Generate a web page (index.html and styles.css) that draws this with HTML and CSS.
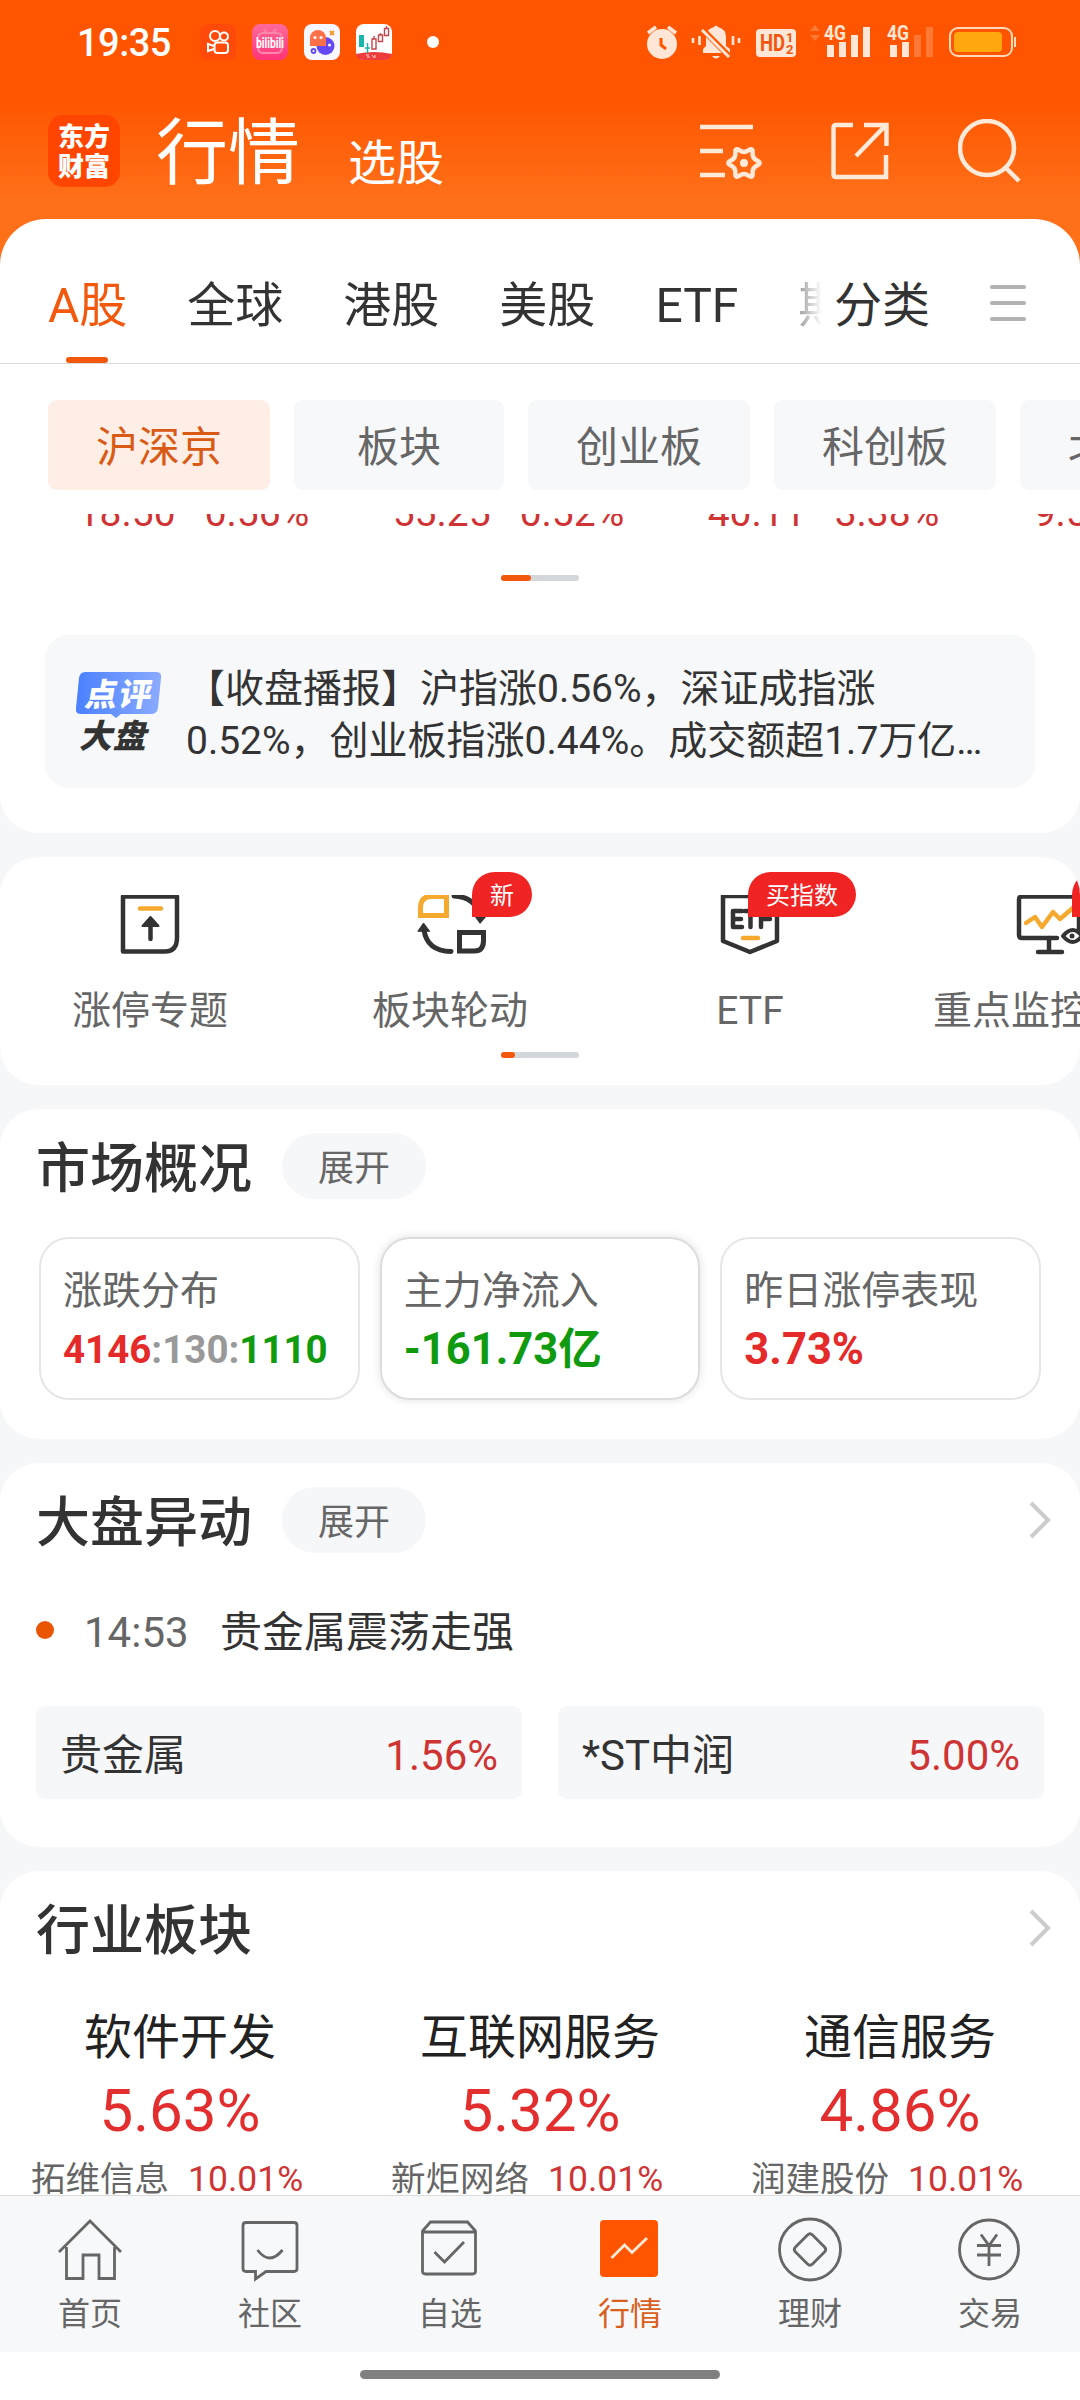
FILE: index.html
```html
<!DOCTYPE html>
<html lang="zh-CN">
<head>
    <meta charset="UTF-8">
    <meta name="viewport" content="width=device-width, initial-scale=1.0">
    <title>行情</title>
    <link rel="stylesheet" href="styles.css">
</head>
<body>
    <div class="app">
        <header class="header">
            <div class="status-bar">
                <span class="clock">19:35</span>
                <div class="status-apps">
                    <svg width="36" height="36" viewBox="0 0 36 36">
                        <rect width="36" height="36" rx="8" fill="#ff4a0a"/>
                        <g fill="none" stroke="#fff" stroke-width="2">
                            <circle cx="15" cy="12" r="5"/><circle cx="24" cy="12.500" r="4"/>
                            <rect x="14.500" y="18.500" width="13.500" height="10.500" rx="3"/>
                            <path d="M14 22l-6-2v7l6-2"/>
                        </g>
                    </svg>
                    <svg width="36" height="36" viewBox="0 0 36 36">
                        <defs><linearGradient id="pink" x1="0" y1="0" x2="0" y2="1"><stop offset="0" stop-color="#ff6a9a"/><stop offset="1" stop-color="#ff3479"/></linearGradient></defs>
                        <rect width="36" height="36" rx="8" fill="url(#pink)"/>
                        <path d="M12 5l3 4M24 5l-3 4M11 9h14q5 0 5 5v9q0 6-5 6H11q-5 0-5-6v-9q0-5 5-5z" fill="none" stroke="#ff86ad" stroke-width="2"/>
                        <text x="18" y="24" class="bili" textLength="28" lengthAdjust="spacingAndGlyphs">bilibili</text>
                    </svg>
                    <svg width="36" height="36" viewBox="0 0 36 36">
                        <rect width="36" height="36" rx="8" fill="#f7f7ff"/>
                        <circle cx="21.500" cy="22" r="9" fill="#6548f5"/>
                        <path d="M6 22v-8a8 8 0 0 1 16 0v8z" fill="#ff7048"/>
                        <g fill="#fff"><circle cx="11" cy="13.500" r="1.500"/><circle cx="17" cy="13.500" r="1.500"/><circle cx="25.500" cy="21" r="1.500"/></g>
                        <path d="M26 7l4 4m0-4l-4 4" stroke="#f29a2e" stroke-width="2"/>
                        <circle cx="9.500" cy="27" r="2" fill="none" stroke="#6548f5" stroke-width="1.800"/>
                    </svg>
                    <svg width="36" height="36" viewBox="0 0 36 36">
                        <rect width="36" height="36" rx="8" fill="#fff"/>
                        <path d="M0 30q18-4 36 0q-1 6-8 6H8q-7 0-8-6z" fill="#ee3b3b"/>
                        <path d="M3 11h5v12H3z" fill="#17b5ac"/>
                        <path d="M11.500 19v10M9 24h5" stroke="#17b5ac" stroke-width="1.500"/>
                        <path d="M16 15h4v10h-4zM18 12v3M22.500 11h4v6.500h-4zM24.500 9v2M28.500 4.500h4v7h-4zM30.500 2v3" fill="none" stroke="#c4454e" stroke-width="1.400"/>
                        <path d="M10 31h3m-2 2h3m2-2l2 3m1-3v3" stroke="#ffd8d8" stroke-width="1"/>
                    </svg>
                </div>
                <i class="status-dot"></i>
                <svg class="status-icons" width="376" height="40" viewBox="642 22 376 40">
                    <g fill="#ffe6d6">
                        <circle cx="662" cy="44" r="15"/>
                        <path d="M648 33l8-6M676 33l-8-6" stroke="#ffe6d6" stroke-width="3.500"/>
                        <path d="M661 38v7l5 4" fill="none" stroke="#ff5500" stroke-width="3"/>
                        <path d="M703 53v-4l3-3v-9q0-8 8-10q2-3 4 0q8 2 8 10v9l4 3v4zM712 56h8q-4 5-8 0z"/>
                        <path d="M701 28l28 28" stroke="#ff5500" stroke-width="6"/>
                        <path d="M702 30l27 27" stroke="#ffe6d6" stroke-width="3"/>
                        <path d="M693 38v5M699.500 36v9M733 36v9M739 38v5" stroke="#ffe6d6" stroke-width="2.600"/>
                        <rect x="756" y="29" width="40" height="28" rx="4"/>
                        <path d="M827 45h7v12h-7zM839 42h7v15h-7zM851 35h7v22h-7zM863 27h7v30h-7zM890 45h7v12h-7zM902 42h7v15h-7z"/>
                        <g opacity=".25"><path d="M914 35h7v22h-7zM926 27h7v30h-7zM810 31l5-6 5 6zM810 35l5 6 5-6z"/></g>
                    </g>
                    <text x="760" y="51" class="hd" textLength="25" lengthAdjust="spacingAndGlyphs">HD</text>
                    <text x="786" y="42" class="hd-sub">1</text>
                    <text x="786" y="54" class="hd-sub">2</text>
                    <text x="824" y="40" class="net" textLength="22" lengthAdjust="spacingAndGlyphs">4G</text>
                    <text x="887" y="40" class="net" textLength="22" lengthAdjust="spacingAndGlyphs">4G</text>
                    <rect x="950" y="28" width="62" height="28" rx="8" fill="none" stroke="#ffd9b8" stroke-width="2"/>
                    <rect x="954" y="32" width="48" height="20" rx="4" fill="#ffa70f"/>
                    <path d="M1015 37v10" stroke="#ffd9b8" stroke-width="2"/>
                </svg>
            </div>
            <div class="title-bar">
                <div class="logo"><span>东方</span><span>财富</span></div>
                <h1 class="title">行情</h1>
                <span class="subtitle">选股</span>
                <div class="header-icons">
                    <svg width="64" height="64" viewBox="1 0 64 64" fill="none" stroke="#ffe9d9" stroke-width="4.500">
                        <path d="M0 8h54M0 32h24M0 56h26"/>
                        <path d="M58.100 41.600Q53.200 39.200 53.600 33.800Q54 28.400 49.500 31.400Q45 34.500 40.500 31.400Q36 28.400 36.400 33.800Q36.800 39.200 31.900 41.600Q27 44 31.900 46.400Q36.800 48.800 36.400 54.200Q36 59.600 40.500 56.600Q45 53.500 49.500 56.600Q54 59.600 53.600 54.200Q53.200 48.800 58.100 46.400Q63 44 58.100 41.600z"/>
                        <circle cx="45" cy="44" r="4" fill="#ffe9d9" stroke="none"/>
                    </svg>
                    <svg width="60" height="64" viewBox="2 0 60 64" fill="none" stroke="#ffe9d9" stroke-width="4.500">
                        <path d="M24 6H7Q4.500 6 4.500 9v46q0 3 2.500 3h50V36M35 6h22.500v21M57 6L27 37"/>
                    </svg>
                    <svg width="64" height="64" viewBox="0 0 64 64" fill="none" stroke="#ffe9d9" stroke-width="4.500">
                        <circle cx="29" cy="29" r="27"/><path d="M47 48l14 14"/>
                    </svg>
                </div>
            </div>
        </header>

        <section class="card card-first">
            <nav class="tabs">
                <div class="tab-list">
                    <span class="tab active">A股</span>
                    <span class="tab">全球</span>
                    <span class="tab">港股</span>
                    <span class="tab">美股</span>
                    <span class="tab">ETF</span>
                    <span class="tab">期</span>
                </div>
                <span class="tab-more">分类</span>
                <div class="burger"><i></i><i></i><i></i></div>
            </nav>
            <div class="chips">
                <span class="chip active">沪深京</span>
                <span class="chip chip-short">板块</span>
                <span class="chip">创业板</span>
                <span class="chip">科创板</span>
                <span class="chip">北交所</span>
            </div>
            <div class="indices">
                <div class="index"><span>18.50</span><span>0.56%</span></div>
                <div class="index"><span>55.25</span><span>0.52%</span></div>
                <div class="index"><span>40.11</span><span>3.38%</span></div>
                <div class="index"><span>9.53</span><span>0.56%</span></div>
            </div>
            <div class="pager"><i class="pager-on"></i></div>
            <div class="notice">
                <svg class="notice-tag" width="88" height="84" viewBox="0 0 88 84">
                    <defs><linearGradient id="blue"><stop offset="0" stop-color="#4a80ff"/><stop offset="1" stop-color="#8aabff"/></linearGradient></defs>
                    <path d="M9 1h71q6 0 5 6l-3 30q-1 6-7 6H45l-5 4-5-4H5q-6 0-5-6L3 7q1-6 6-6z" fill="url(#blue)"/>
                    <text x="14" y="35" transform="skewX(-10)" class="tag-top" textLength="66">点评</text>
                    <text x="22" y="77" transform="skewX(-14)" class="tag-bottom" textLength="67">大盘</text>
                </svg>
                <p class="notice-text">【收盘播报】沪指涨0.56%，深证成指涨<br>0.52%，创业板指涨0.44%。成交额超1.7万亿…</p>
            </div>
        </section>

        <section class="card quick">
            <div class="quick-list">
                <div class="quick-item">
                    <svg width="72" height="62" viewBox="0 1 72 62" fill="none" stroke="#333" stroke-width="4.500" stroke-linecap="round" stroke-linejoin="round">
                        <path d="M9 2.500h54v41q0 14-12 14H9z"/>
                        <path d="M26 14.500h21" stroke="#f5a92f"/>
                        <path d="M36.500 28v17"/><path d="M36.500 23l-8 9h16z" fill="#333" stroke-width="2"/>
                    </svg>
                    <span>涨停专题</span>
                </div>
                <div class="quick-item">
                    <svg width="72" height="62" viewBox="-1 1 72 62" fill="none" stroke="#333" stroke-width="5" stroke-linecap="round">
                        <path d="M5.500 21.500v-8q0-11 11-11h15v19z" stroke="#f5a92f"/>
                        <path d="M39 2q22 1 26 21"/>
                        <path d="M60 23l5 7 6-7z" fill="#333" stroke="none"/>
                        <path d="M36 57.500Q12 57 9 36"/>
                        <path d="M3 37l5.500-8 6 8z" fill="#333" stroke-width="1"/>
                        <path d="M44.500 38.500h24v8q0 10.500-9 10.500h-15z"/>
                    </svg>
                    <span>板块轮动</span>
                    <b class="badge">新</b>
                </div>
                <div class="quick-item">
                    <svg width="72" height="62" viewBox="0 1 72 62" fill="none" stroke="#333" stroke-width="4.500" stroke-linejoin="round" stroke-linecap="round">
                        <path d="M9 2h54v45L36 58 9 47z"/>
                        <path d="M29 44h15" stroke="#f5a92f"/>
                        <path d="M28 17h-9v16h9M19 25h8M31 17h11M36.500 17v16M57 17H47v16M47 25h9"/>
                    </svg>
                    <span>ETF</span>
                    <b class="badge badge-wide">买指数</b>
                </div>
                <div class="quick-item">
                    <svg width="72" height="62" viewBox="0 1 72 62" fill="none" stroke="#333" stroke-width="4.500" stroke-linejoin="round" stroke-linecap="round">
                        <path d="M43 44H8q-3 0-3-3V5.500q0-3 3-3h54q3 0 3 3v30"/>
                        <path d="M35 44v13M24 58h24"/>
                        <path d="M12 29l9-6 7 10L39 18l7 7 14-12" stroke="#f5a92f"/>
                        <path d="M49 42q10-12 19 0q-9 12-19 0z" stroke-width="4"/><circle cx="58" cy="42" r="2.500" fill="#333" stroke="none"/>
                    </svg>
                    <span class="quick-cut">重点监控</span>
                    <b class="badge">新</b>
                </div>
            </div>
            <div class="pager"><i class="pager-on pager-short"></i></div>
        </section>

        <section class="card market">
            <div class="card-head">
                <h2>市场概况</h2>
                <span class="pill">展开</span>
            </div>
            <div class="stats">
                <div class="stat">
                    <span class="stat-label">涨跌分布</span>
                    <b class="stat-value stat-small"><em class="up">4146</em><em class="flat">:130:</em><em class="down">1110</em></b>
                </div>
                <div class="stat stat-on">
                    <span class="stat-label">主力净流入</span>
                    <b class="stat-value down">-161.73亿</b>
                </div>
                <div class="stat">
                    <span class="stat-label">昨日涨停表现</span>
                    <b class="stat-value up">3.73%</b>
                </div>
            </div>
        </section>

        <section class="card moves">
            <div class="card-head">
                <h2>大盘异动</h2>
                <span class="pill">展开</span>
                <svg class="arrow" width="24" height="38" viewBox="0 0 24 38"><path d="M3 2l17 17L3 36" fill="none" stroke="#ccc" stroke-width="4"/></svg>
            </div>
            <div class="move">
                <i class="dot"></i>
                <span class="time">14:53</span>
                <span>贵金属震荡走强</span>
            </div>
            <div class="move-boxes">
                <div class="move-box"><span>贵金属</span><span class="rate">1.56%</span></div>
                <div class="move-box"><span>*ST中润</span><span class="rate">5.00%</span></div>
            </div>
        </section>

        <section class="card sectors">
            <div class="card-head">
                <h2>行业板块</h2>
                <svg class="arrow" width="24" height="38" viewBox="0 0 24 38"><path d="M3 2l17 17L3 36" fill="none" stroke="#ccc" stroke-width="4"/></svg>
            </div>
            <div class="sector-list">
                <div class="sector">
                    <span class="sector-name">软件开发</span>
                    <span class="sector-rate">5.63%</span>
                    <div class="leader"><span>拓维信息</span><span class="rate">10.01%</span></div>
                </div>
                <div class="sector">
                    <span class="sector-name">互联网服务</span>
                    <span class="sector-rate">5.32%</span>
                    <div class="leader"><span>新炬网络</span><span class="rate">10.01%</span></div>
                </div>
                <div class="sector">
                    <span class="sector-name">通信服务</span>
                    <span class="sector-rate">4.86%</span>
                    <div class="leader"><span>润建股份</span><span class="rate">10.01%</span></div>
                </div>
            </div>
        </section>

        <nav class="bottom-nav">
            <div class="nav-item">
                <svg viewBox="0 0 68 68"><path d="M3 37l31-31 31 31M10.500 32v31.500H27V40h16v23.500h15.500V32"/></svg>
                <span>首页</span>
            </div>
            <div class="nav-item">
                <svg viewBox="0 0 68 68"><path d="M10 7.500h48q3 0 3 3v43q0 3-3 3H30L19.500 64v-7.500H10q-3 0-3-3v-43q0-3 3-3zM21.500 35q12 16 25 0"/></svg>
                <span>社区</span>
            </div>
            <div class="nav-item">
                <svg viewBox="1 0 68 68"><path d="M7.500 17v39q0 3 3 3h47q3 0 3-3V17zM7.500 16l8-9h37l8 9M19.500 37l10 10L49 27"/></svg>
                <span>自选</span>
            </div>
            <div class="nav-item active">
                <svg viewBox="1 0 68 68"><rect x="5" y="5" width="58" height="57" rx="4" fill="#ff5500" stroke="none"/><path d="M16.500 43L29.500 30l7.500 7.500L52 23" stroke="#ffe9d5"/></svg>
                <span>行情</span>
            </div>
            <div class="nav-item">
                <svg viewBox="0 0 68 68"><circle cx="34" cy="34.500" r="30.500"/><path d="M31.500 20q2.500-2.500 5 0l12 12q2.500 2.500 0 5l-12 12q-2.500 2.500-5 0l-12-12q-2.500-2.500 0-5z"/></svg>
                <span>理财</span>
            </div>
            <div class="nav-item">
                <svg viewBox="1 0 68 68"><circle cx="34" cy="34.500" r="29.500"/><path d="M26 19.500l8 11 8-11M34 30v21M22 30.500h24M22 40h24"/></svg>
                <span>交易</span>
            </div>
        </nav>
        <div class="home-bar"><i></i></div>
    </div>
</body>
</html>
```
FILE: styles.css
```css
* {
    box-sizing: border-box;
}
body {
    margin: 0;
    font-family: Roboto, "Noto Sans CJK SC", sans-serif;
    color: #333;
}
h1, h2, p {
    margin: 0;
}
i, em {
    font-style: normal;
}
svg {
    display: block;
    flex: none;
}
.app {
    width: 1080px;
    height: 2400px;
    overflow: hidden;
    display: flex;
    flex-direction: column;
    background: linear-gradient(#ff5500 100px, #ff7019 200px) no-repeat 0 0 / 100% 300px, #f6f7f9;
}

/* header */
.header {
    height: 219px;
    flex: none;
    color: #fff;
}
.status-bar {
    height: 84px;
    padding: 0 62px 0 77px;
    display: flex;
    align-items: center;
}
.clock {
    width: 123px;
    padding-top: 2px;
    font-size: 38px;
    font-weight: 500;
    letter-spacing: -0.5px;
}
.status-apps {
    display: flex;
    gap: 16px;
}
.bili {
    font: bold 15px Roboto, sans-serif;
    fill: #fff;
    text-anchor: middle;
}
.status-dot {
    width: 12px;
    height: 12px;
    margin-left: 35px;
    border-radius: 50%;
    background: #fff;
}
.status-icons {
    margin-left: auto;
}
.hd {
    font: bold 23px Roboto, sans-serif;
    fill: #f2560e;
}
.hd-sub {
    font: bold 13px Roboto, sans-serif;
    fill: #f2560e;
}
.net {
    font: bold 20px Roboto, sans-serif;
    fill: #ffe6d6;
}
.title-bar {
    height: 135px;
    padding: 0 58px 0 48px;
    display: flex;
    align-items: flex-start;
}
.logo {
    width: 72px;
    height: 72px;
    margin-top: 31px;
    padding-top: 5px;
    border-radius: 15px;
    background: #ff4500;
    text-align: center;
    font-family: "Noto Sans CJK SC", sans-serif;
    font-size: 26px;
    font-weight: 900;
    line-height: 30px;
}
.logo span {
    display: block;
}
.title {
    margin: 24px 0 0 36px;
    font-size: 72px;
    font-weight: 400;
    line-height: 92px;
}
.subtitle {
    margin: 48px 0 0 48px;
    font-size: 48px;
    line-height: 64px;
}
.header-icons {
    margin: 35px 0 0 auto;
    display: flex;
    gap: 67px;
}

/* cards */
.card {
    flex: none;
    margin-bottom: 24px;
    border-radius: 38px;
    background: #fff;
    overflow: hidden;
}
.card-first {
    height: 614px;
    border-radius: 46px 46px 38px 38px;
}
.tabs {
    height: 145px;
    padding: 0 54px 0 48px;
    border-bottom: 1px solid #dcdcdc;
    display: flex;
    font-size: 48px;
    line-height: 114px;
}
.tab-list {
    width: 774px;
    flex: none;
    display: flex;
    gap: 60px;
    overflow: hidden;
    mask-image: linear-gradient(to right, #000 725px, transparent 774px);
}
.tab {
    flex: none;
    padding-top: 30px;
}
.tab.active {
    position: relative;
    color: #f2590c;
}
.tab.active::after {
    content: '';
    position: absolute;
    left: 18px;
    bottom: 0;
    width: 42px;
    height: 6px;
    border-radius: 3px;
    background: #f2590c;
}
.tab-more {
    margin-left: 12px;
    padding-top: 30px;
}
.burger {
    width: 36px;
    height: 36px;
    margin: 66px 0 0 auto;
    display: flex;
    flex-direction: column;
    justify-content: space-between;
}
.burger i {
    height: 4px;
    border-radius: 2px;
    background: #b2b2b2;
}
.chips {
    margin-top: 36px;
    padding-left: 48px;
    display: flex;
    gap: 24px;
}
.chip {
    width: 222px;
    height: 90px;
    flex: none;
    border-radius: 9px;
    background: #f7f8fa;
    color: #666;
    font-size: 42px;
    line-height: 96px;
    text-align: center;
}
.chip-short {
    width: 210px;
}
.chip.active {
    background: #ffeee6;
    color: #d95a14;
}

/* scrolled under the chips, only the lower part shows */
.indices {
    height: 61px;
    margin-top: 24px;
    padding-left: 36px;
    overflow: hidden;
    display: flex;
    color: #d03333;
    font-size: 39px;
    line-height: 40px;
}
.index {
    width: 315px;
    margin-top: -21px;
    flex: none;
    display: flex;
    justify-content: center;
    gap: 29px;
}
.pager {
    width: 78px;
    height: 6px;
    margin: 0 auto;
    border-radius: 3px;
    background: #d3d6db;
}
.pager-on {
    display: block;
    width: 30px;
    height: 6px;
    border-radius: 3px;
    background: #f2590c;
}
.pager-short {
    width: 14px;
}
.notice {
    height: 153px;
    margin: 54px 45px 0;
    padding: 28px 0 0 31px;
    border-radius: 24px;
    background: #f7f8fa;
    display: flex;
}
.notice-tag {
    margin-top: 8px;
}
.tag-top {
    font: 900 32px "Noto Sans CJK SC", sans-serif;
    fill: #fff;
}
.tag-bottom {
    font: 900 33px "Noto Sans CJK SC", sans-serif;
    fill: #333;
}
.notice-text {
    margin-left: 22px;
    font-size: 39px;
    line-height: 52px;
    white-space: nowrap;
}

/* quick entries */
.quick {
    height: 228px;
}
.quick-list {
    height: 195px;
    display: flex;
}
.quick-item {
    position: relative;
    width: 300px;
    flex: none;
    padding-top: 38px;
    display: flex;
    flex-direction: column;
    align-items: center;
    color: #666;
    font-size: 39px;
    line-height: 48px;
}
.quick-item span {
    margin-top: 30px;
}
.quick-item .quick-cut {
    width: 234px;
}
.badge {
    position: absolute;
    left: 172px;
    top: 15px;
    width: 60px;
    height: 45px;
    border-radius: 23px 23px 23px 0;
    background: #f12424;
    color: #fff;
    font-size: 24px;
    font-weight: 400;
    line-height: 49px;
    text-align: center;
}
.badge-wide {
    left: 148px;
    width: 108px;
}

.card-head {
    height: 66px;
    margin-top: 24px;
    padding: 0 28px 0 36px;
    display: flex;
    align-items: center;
}
.card-head h2 {
    font-size: 54px;
    font-weight: 500;
    line-height: 66px;
    padding-top: 8px;
}
.pill {
    width: 144px;
    height: 66px;
    margin-left: 30px;
    border-radius: 33px;
    background: #f6f7f9;
    color: #666;
    font-size: 36px;
    line-height: 73px;
    text-align: center;
}
.arrow {
    margin-left: auto;
}

/* market overview */
.market {
    height: 330px;
}
.stats {
    margin-top: 38px;
    padding: 0 39px;
    display: flex;
    gap: 20px;
}
.stat {
    flex: 1;
    height: 163px;
    padding: 23px 0 0 22px;
    border: 2px solid #e6e6e6;
    border-radius: 30px;
    display: flex;
    flex-direction: column;
}
.stat-on {
    border-color: #dcdcdc;
    box-shadow: 0 0 10px rgba(0, 0, 0, 0.12);
}
.stat-label {
    color: #666;
    font-size: 39px;
    line-height: 58px;
}
.stat-value {
    font-size: 43.500px;
    line-height: 60px;
}
.stat-small {
    font-size: 38.500px;
}
.up {
    color: #e52a2a;
}
.flat {
    color: #999;
}
.down {
    color: #0f9a0f;
}

/* moves */
.moves {
    height: 384px;
}
.move {
    margin-top: 50px;
    padding-left: 36px;
    display: flex;
    align-items: center;
    font-size: 42px;
    line-height: 60px;
}
.dot {
    width: 18px;
    height: 18px;
    margin-right: 30px;
    margin-top: -6px;
    border-radius: 50%;
    background: #ea5504;
}
.time {
    width: 136px;
    color: #666;
}
.move-boxes {
    margin-top: 43px;
    padding: 0 36px;
    display: flex;
    gap: 36px;
}
.move-box {
    flex: 1;
    height: 93px;
    padding: 0 24px;
    border-radius: 9px;
    background: #f6f7f9;
    display: flex;
    justify-content: space-between;
    font-size: 42px;
    line-height: 99px;
}
.rate {
    color: #cf3434;
}

/* sectors, cut by the bottom nav */
.sectors {
    height: 324px;
    margin-bottom: 0;
    border-radius: 38px 38px 0 0;
}
.sector-list {
    margin-top: 45px;
    display: flex;
}
.sector {
    width: 360px;
    display: flex;
    flex-direction: column;
    align-items: center;
}
.sector-name {
    color: #222;
    font-size: 48px;
    line-height: 64px;
}
.sector-rate {
    margin-top: 3px;
    color: #e22e2e;
    font-size: 60px;
    line-height: 76px;
}
.leader {
    align-self: flex-start;
    margin-top: 6px;
    padding-left: 31px;
    display: flex;
    gap: 19px;
    color: #666;
    font-size: 34.500px;
    line-height: 48px;
}
.leader .rate {
    font-size: 35.500px;
}

/* bottom nav */
.bottom-nav {
    height: 157px;
    flex: none;
    border-top: 1px solid #dcdcdc;
    background: #f7f8fa;
    display: flex;
}
.nav-item {
    width: 180px;
    padding-top: 19px;
    display: flex;
    flex-direction: column;
    align-items: center;
    color: #666;
    font-size: 32px;
    line-height: 40px;
}
.nav-item svg {
    width: 68px;
    height: 68px;
    fill: none;
    stroke: #666;
    stroke-width: 2.800;
}
.nav-item span {
    margin-top: 11px;
}
.nav-item.active {
    color: #d9601c;
}
.home-bar {
    flex: 1;
    padding-top: 18px;
    background: #fff;
}
.home-bar i {
    display: block;
    width: 360px;
    height: 9px;
    margin: 0 auto;
    border-radius: 5px;
    background: #808080;
}
```
